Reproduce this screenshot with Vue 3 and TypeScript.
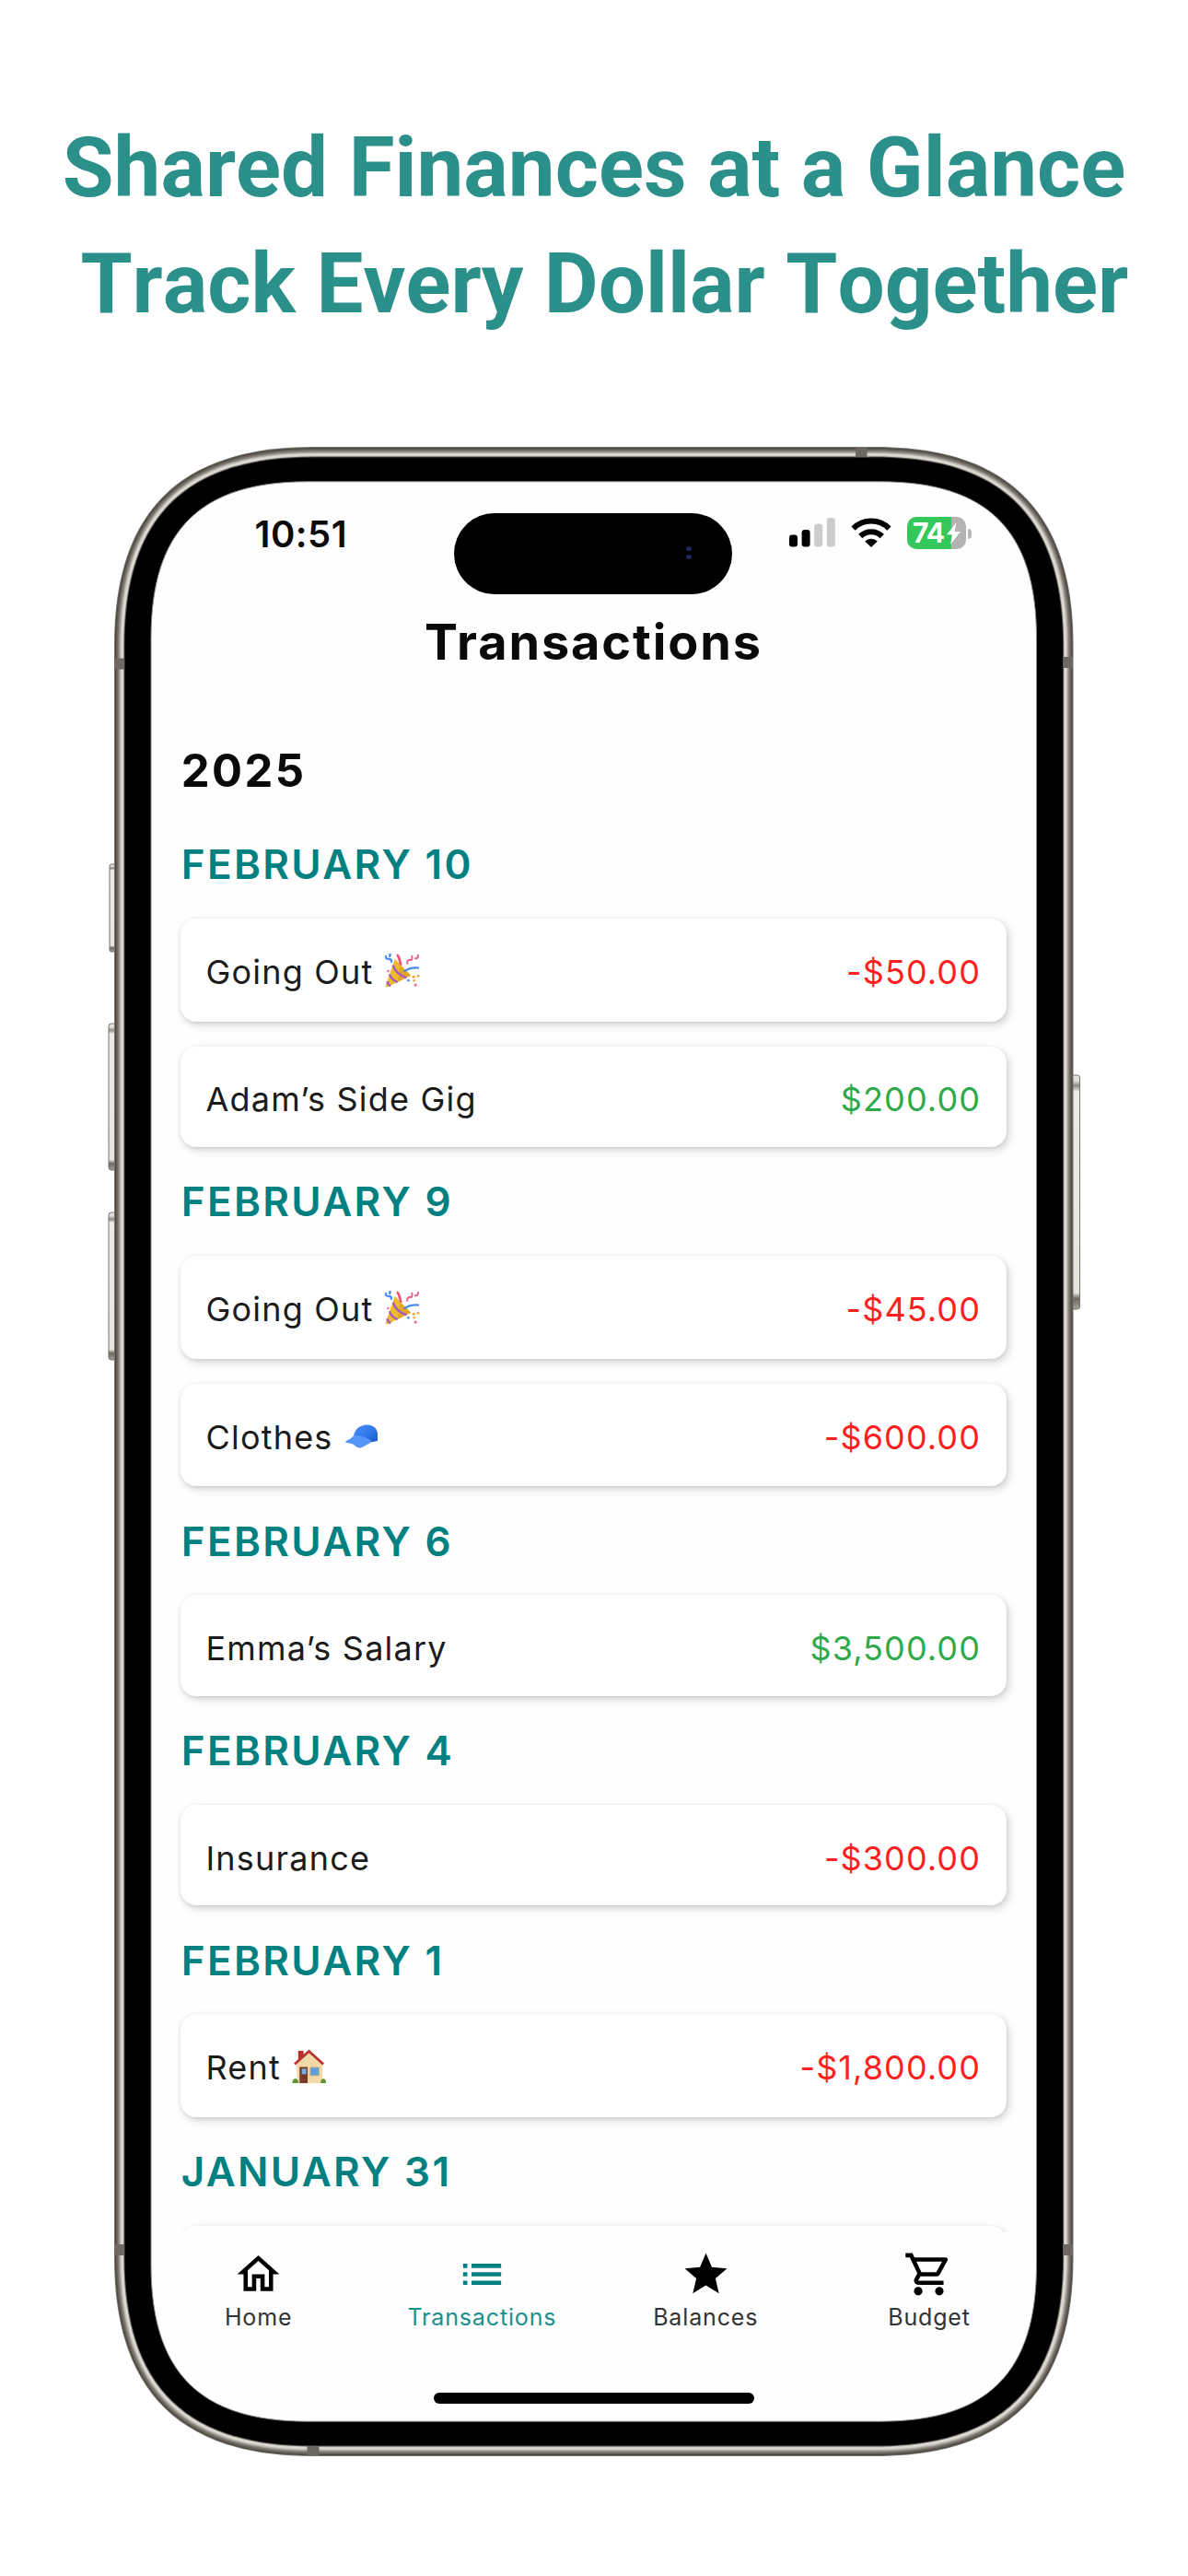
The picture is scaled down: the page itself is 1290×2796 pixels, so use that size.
<script setup lang="ts">
type Emoji = 'party' | 'cap' | 'house'
interface Entry { name: string; amount: string; income?: boolean; emoji?: Emoji }
interface Day { label: string; entries: Entry[] }

const days: Day[] = [
  { label: 'FEBRUARY 10', entries: [
    { name: 'Going Out', amount: '-$50.00', emoji: 'party' },
    { name: 'Adam’s Side Gig', amount: '$200.00', income: true },
  ] },
  { label: 'FEBRUARY 9', entries: [
    { name: 'Going Out', amount: '-$45.00', emoji: 'party' },
    { name: 'Clothes', amount: '-$600.00', emoji: 'cap' },
  ] },
  { label: 'FEBRUARY 6', entries: [{ name: 'Emma’s Salary', amount: '$3,500.00', income: true }] },
  { label: 'FEBRUARY 4', entries: [{ name: 'Insurance', amount: '-$300.00' }] },
  { label: 'FEBRUARY 1', entries: [{ name: 'Rent', amount: '-$1,800.00', emoji: 'house' }] },
  { label: 'JANUARY 31', entries: [{ name: '', amount: '' }] },
]

const tabs = [
  { label: 'Home', icon: 'M12 5.69l5 4.5V18h-2v-6H9v6H7v-7.81l5-4.5M12 3L2 12h3v8h6v-6h2v6h6v-8h3L12 3z' },
  { label: 'Transactions', active: true, icon: 'M3 13h2v-2H3v2zm0 4h2v-2H3v2zm0-8h2V7H3v2zm4 4h14v-2H7v2zm0 4h14v-2H7v2zM7 7v2h14V7H7z' },
  { label: 'Balances', icon: 'M12 17.27L18.18 21l-1.64-7.03L22 9.24l-7.19-.61L12 2 9.19 8.63 2 9.24l5.46 4.73L5.82 21z' },
  { label: 'Budget', icon: 'M15.55 13c.75 0 1.41-.41 1.75-1.03l3.58-6.49c.37-.66-.11-1.48-.87-1.48H5.21l-.94-2H1v2h2l3.6 7.59-1.35 2.44C4.52 15.37 5.48 17 7 17h12v-2H7l1.1-2h7.45zM6.16 6h12.15l-2.76 5H8.53L6.16 6zM7 18c-1.1 0-1.99.9-1.99 2S5.9 22 7 22s2-.9 2-2-.9-2-2-2zm10 0c-1.1 0-1.99.9-1.99 2s.89 2 1.99 2 2-.9 2-2-.9-2-2-2z' },
]

const W = 1041.5
const H = 2181

// Continuous-corner outline inset by d; e is the corner extent, a the handle offset.
function outline(d: number, e: number, a: number, dy = d): string {
  const l = d, t = dy, r = W - d, b = H - dy
  return `M${l + e} ${t}H${r - e}C${r - a} ${t} ${r} ${t + a} ${r} ${t + e}V${b - e}` +
    `C${r} ${b - a} ${r - a} ${b} ${r - e} ${b}H${l + e}C${l + a} ${b} ${l} ${b - a} ${l} ${b - e}` +
    `V${t + e}C${l} ${t + a} ${l + a} ${t} ${l + e} ${t}Z`
}

const rim = ['#77746e', '#4a4640', '#5f5b54', '#6b665e', '#7b766e', '#8f8a83', '#aaa69f', '#c6c3bd', '#dad7d2', '#dfdcd7', '#c9c6c0', '#55524d']
const layers = rim.map((color, i) => ({ color, d: outline(i * 0.95, 215 - i * 0.85, 71 - i * 0.45) }))
const bezel = outline(11.4, 205, 65.5)
const screen = outline(40, 170, 53, 37.8)
</script>

<template>
  <main class="page">
    <h1 class="headline">Shared Finances at a Glance<br>{{ ' Track Every Dollar Together' }}</h1>

    <section class="phone">
      <svg class="frame" width="1041.5" height="2181" viewBox="0 0 1041.5 2181">
        <defs>
          <linearGradient id="key" x1="0" y1="0" x2="0" y2="1">
            <stop offset="0" stop-color="#e9e7e3" /><stop offset=".025" stop-color="#dcdad5" />
            <stop offset=".045" stop-color="#8d8a84" /><stop offset=".07" stop-color="#ecebe7" />
            <stop offset=".93" stop-color="#e6e4df" /><stop offset=".955" stop-color="#6c6963" />
            <stop offset="1" stop-color="#a5a29c" />
          </linearGradient>
        </defs>
        <g fill="url(#key)" stroke="#77746e" stroke-width="1">
          <rect x="-5" y="453" width="9" height="95" rx="2" />
          <rect x="-6" y="626" width="10" height="159" rx="3" />
          <rect x="-6" y="831" width="10" height="160" rx="3" />
          <rect x="1038" y="682" width="10.5" height="254" rx="3" />
        </g>
        <path v-for="(l, i) in layers" :key="i" :d="l.d" :fill="l.color" />
        <g fill="#6d6962">
          <rect x="0.5" y="229.5" width="12" height="12" /><rect x="1029.5" y="228" width="11.5" height="12" />
          <rect x="0.5" y="1951" width="12" height="12" /><rect x="1029.5" y="1951" width="11.5" height="12" />
          <rect x="805" y="0.5" width="12.5" height="12" /><rect x="209.5" y="2168" width="13" height="12.5" />
        </g>
        <path :d="bezel" fill="#000" />
        <path :d="screen" fill="#fefefe" stroke="#8a8a8a" stroke-width="1" />
      </svg>

      <div class="screen">
        <div class="status">
          <span class="clock">10:51</span>
          <span class="island"><i /><i /></span>
          <span class="indicators">
            <svg width="50" height="32" viewBox="0 0 50 32">
              <rect x="0" y="18.5" width="9" height="13" rx="3" />
              <rect x="13.6" y="13" width="9" height="18.5" rx="3" />
              <rect x="27.2" y="6.5" width="9" height="25" rx="3" fill="#ccc" />
              <rect x="40.8" y="0" width="9" height="31.5" rx="3" fill="#ccc" />
            </svg>
            <svg class="wifi" width="44" height="32" viewBox="0 0 44 32">
              <g fill="none" stroke="#000" stroke-width="6">
                <path d="M2.6 11.6a27.4 27.4 0 0 1 38.8 0" />
                <path d="M10.2 20a16.8 16.8 0 0 1 23.6 0" />
              </g>
              <path d="M22 32l-6.8-6.4a9.8 9.8 0 0 1 13.6 0z" />
            </svg>
            <span class="battery">
              <b>74</b>
              <svg width="16" height="24" viewBox="0 0 16 24"><path fill="#fff" d="M10.5 0L0 13.2h6.2L4 24 15 10H8.6z" /></svg>
            </span>
            <span class="tip" />
          </span>
        </div>

        <h2 class="title">Transactions</h2>

        <div class="list">
          <h3 class="year">2025</h3>
          <section v-for="day in days" :key="day.label" class="day">
            <h4>{{ day.label }}</h4>
            <div class="cards">
              <article v-for="(e, i) in day.entries" :key="i" class="card" :class="{ tall: e.emoji }">
                <span class="name">{{ e.name }}</span>
                <svg v-if="e.emoji === 'party'" class="emoji" viewBox="0 0 40 40">
                  <path d="M11 7L29 25.5 2.5 38.5Q0 39 1 36z" fill="#eebb2e" />
                  <path d="M17 14L29 25.5 14 33z" fill="#d99a1f" opacity=".6" />
                  <path d="M9 14q3 10 15 14M5 24q2 6 9 9M2.5 32q1 4 4 5" fill="none" stroke="#a65bc4" stroke-width="2.4" />
                  <path d="M21 21q7-5 17-4" fill="none" stroke="#4b8cf0" stroke-width="2.4" />
                  <path d="M18 14q-1-3-2-7t-3-4" fill="none" stroke="#f0527c" stroke-width="2.8" />
                  <path d="M1 3q-1 4 3 4t3 4M6 1l-1 4" fill="none" stroke="#4b8cf0" stroke-width="2.4" />
                  <path d="M25 13q-1-5 3-5 3 1 2-5M33 6q4 2 4-4" fill="none" stroke="#ee5f8b" stroke-width="2" />
                  <g fill="#ee6a8e"><circle cx="3.5" cy="20.5" r="1.3" /><circle cx="34" cy="36" r="1.6" /></g>
                  <g fill="#f0a545"><circle cx="32" cy="27" r="1.6" /><circle cx="37" cy="26" r="1.5" /><circle cx="32.5" cy="31" r="1.3" /></g>
                  <g fill="#5a95f0"><circle cx="26" cy="31" r="1.5" /></g>
                </svg>
                <svg v-else-if="e.emoji === 'cap'" class="emoji" viewBox="0 0 39 39">
                  <defs>
                    <linearGradient id="dome" x1="0" y1="0" x2="1" y2="1">
                      <stop offset="0" stop-color="#4a90f5" /><stop offset=".55" stop-color="#2f78e8" /><stop offset="1" stop-color="#1b58c6" />
                    </linearGradient>
                  </defs>
                  <path d="M10 20C11 12 17 8 24 7.6c8-.3 12 5 12 10v7.5l-8 1.5z" fill="url(#dome)" />
                  <path d="M.8 26Q2 24.5 6 23q4-4.5 7-4.3 9 1 16 6l-2 3-8 4.300q-3 1.300-6-.5-3-3.500-7-4-4-.2-5.200-1.500z" fill="#5596f8" />
                </svg>
                <svg v-else-if="e.emoji === 'house'" class="emoji" viewBox="0 0 40 40">
                  <path d="M5 16L19 3l15 13v22H6z" fill="#f1d9a8" />
                  <path d="M7 2h6v6l-6 6z" fill="#b8302c" />
                  <path d="M3 17L19 2.5l16 14.5" fill="none" stroke="#b93733" stroke-width="2.8" />
                  <path d="M8.5 20h9v18h-9z" fill="#7a3b25" /><path d="M11 22h5v6h-5z" fill="#6db3e6" />
                  <path d="M20.5 20.5h9.5v9h-9.5z" fill="#5c9fd4" stroke="#b9a58e" />
                  <path d="M.5 38q0-5 3.5-5t3 5zM32 38q0-5 3-5t3 5z" fill="#5d9432" />
                </svg>
                <span class="amount" :class="{ income: e.income }">{{ e.amount }}</span>
              </article>
            </div>
          </section>
        </div>

        <nav class="tabs">
          <a v-for="t in tabs" :key="t.label" :class="{ active: t.active }">
            <svg width="55" height="55" viewBox="0 0 24 24"><path :d="t.icon" /></svg>
            <span>{{ t.label }}</span>
          </a>
        </nav>
        <div class="home-bar" />
      </div>
    </section>
  </main>
</template>

<style>
body { margin: 0; background: #fff; }
</style>

<style scoped>
.page { width: 1290px; height: 2796px; overflow: hidden; background: #fff; font-family: Inter, sans-serif; }
.headline {
  box-sizing: border-box; margin: 0; padding-top: 119px; height: 484.5px; text-align: center; white-space: pre;
  font: 700 90.7px/126px Roboto, sans-serif; font-kerning: none; color: #2b8f8a;
}
.phone { position: relative; width: 1041.5px; height: 2181px; margin-left: 123.5px; }
.frame { position: absolute; left: 0; top: 0; overflow: visible; }
.screen { display: flex; flex-direction: column; position: relative; width: 962px; height: 2105px; left: 40px; top: 37.5px; color: #0a0a0a; }
.status { display: flex; height: 115px; align-items: center; }
.clock { width: 216.5px; padding-left: 113px; font-size: 40px; font-weight: 600; letter-spacing: .5px; white-space: nowrap; }
.island { display: flex; flex-direction: column; align-items: flex-end; justify-content: center; gap: 4px; box-sizing: border-box; width: 302px; height: 88px; margin-top: 35px; padding: 0 44px 3px 0; align-self: flex-start; border-radius: 44px; background: #000; }
.island i { width: 6px; height: 5px; border-radius: 50%; background: #20275e; }
.indicators { display: flex; align-items: center; margin-left: 61.5px; }
.indicators > svg:first-child { margin-top: -3px; }
.wifi { margin: -3px 17px 0 17px; }
.battery { display: flex; align-items: center; box-sizing: border-box; width: 64px; height: 35px; margin-top: -2px; padding-left: 6.5px; border-radius: 10px; background: linear-gradient(90deg, #34c759 48px, #b3b3b3 48px); }
.battery b { width: 37px; font-size: 30px; line-height: 35px; font-weight: 700; letter-spacing: -1px; color: #fff; }
.tip { width: 4px; height: 11px; margin-left: 2px; border-radius: 0 5px 5px 0; background: #b8b8b8; }
.title { margin: 0; text-align: center; font-size: 54px; line-height: 120.6px; font-weight: 650; letter-spacing: 1.9px; }
.list { height: 1665.4px; box-sizing: border-box; padding: 49.4px 32.5px 0 32.2px; overflow: hidden; }
.year { margin: 0 0 12.2px 1px; font-size: 49px; line-height: 60px; font-weight: 650; letter-spacing: 2.4px; }
.day { padding-top: 29.1px; }
.day h4 { margin: 0 0 28.7px 1px; font-size: 44px; line-height: 60px; font-weight: 600; letter-spacing: 2.35px; color: #008080; }
.cards { display: flex; flex-direction: column; gap: 27px; }
.card {
  display: flex; align-items: center; box-sizing: border-box; height: 109.7px; padding: 6px 28px 0 27.8px; border-radius: 17px; background: #fff;
  box-shadow: 3px 4px 10px rgba(0, 0, 0, .15), 0 1px 4px rgba(0, 0, 0, .1);
}
.card.tall { height: 111.7px; padding-top: 4px; }
.name, .amount { font-size: 36px; line-height: 44px; white-space: nowrap; }
.name { letter-spacing: 1.2px; color: #1b1b1c; }
.emoji { width: 39px; height: 39px; margin: -2px 0 0 12.5px; }
.amount { margin-left: auto; letter-spacing: 1.1px; color: #ff1f1f; }
.amount.income { color: #2eaa4c; }
.tabs { display: grid; grid-template-columns: repeat(4, 242.8px); width: 971px; margin-left: -4.3px; padding-top: 18px; height: 156.5px; box-sizing: border-box; }
.tabs a { display: flex; flex-direction: column; align-items: center; color: #333; }
.tabs svg { fill: #000; }
.tabs span { margin-top: 4px; font-size: 25px; line-height: 30px; letter-spacing: .85px; }
.tabs .active { color: #1d8f8e; }
.tabs .active svg { fill: #008080; }
.home-bar { width: 348px; height: 12px; margin: 17.5px 0 0 307.8px; border-radius: 6px; background: #000; }
</style>
